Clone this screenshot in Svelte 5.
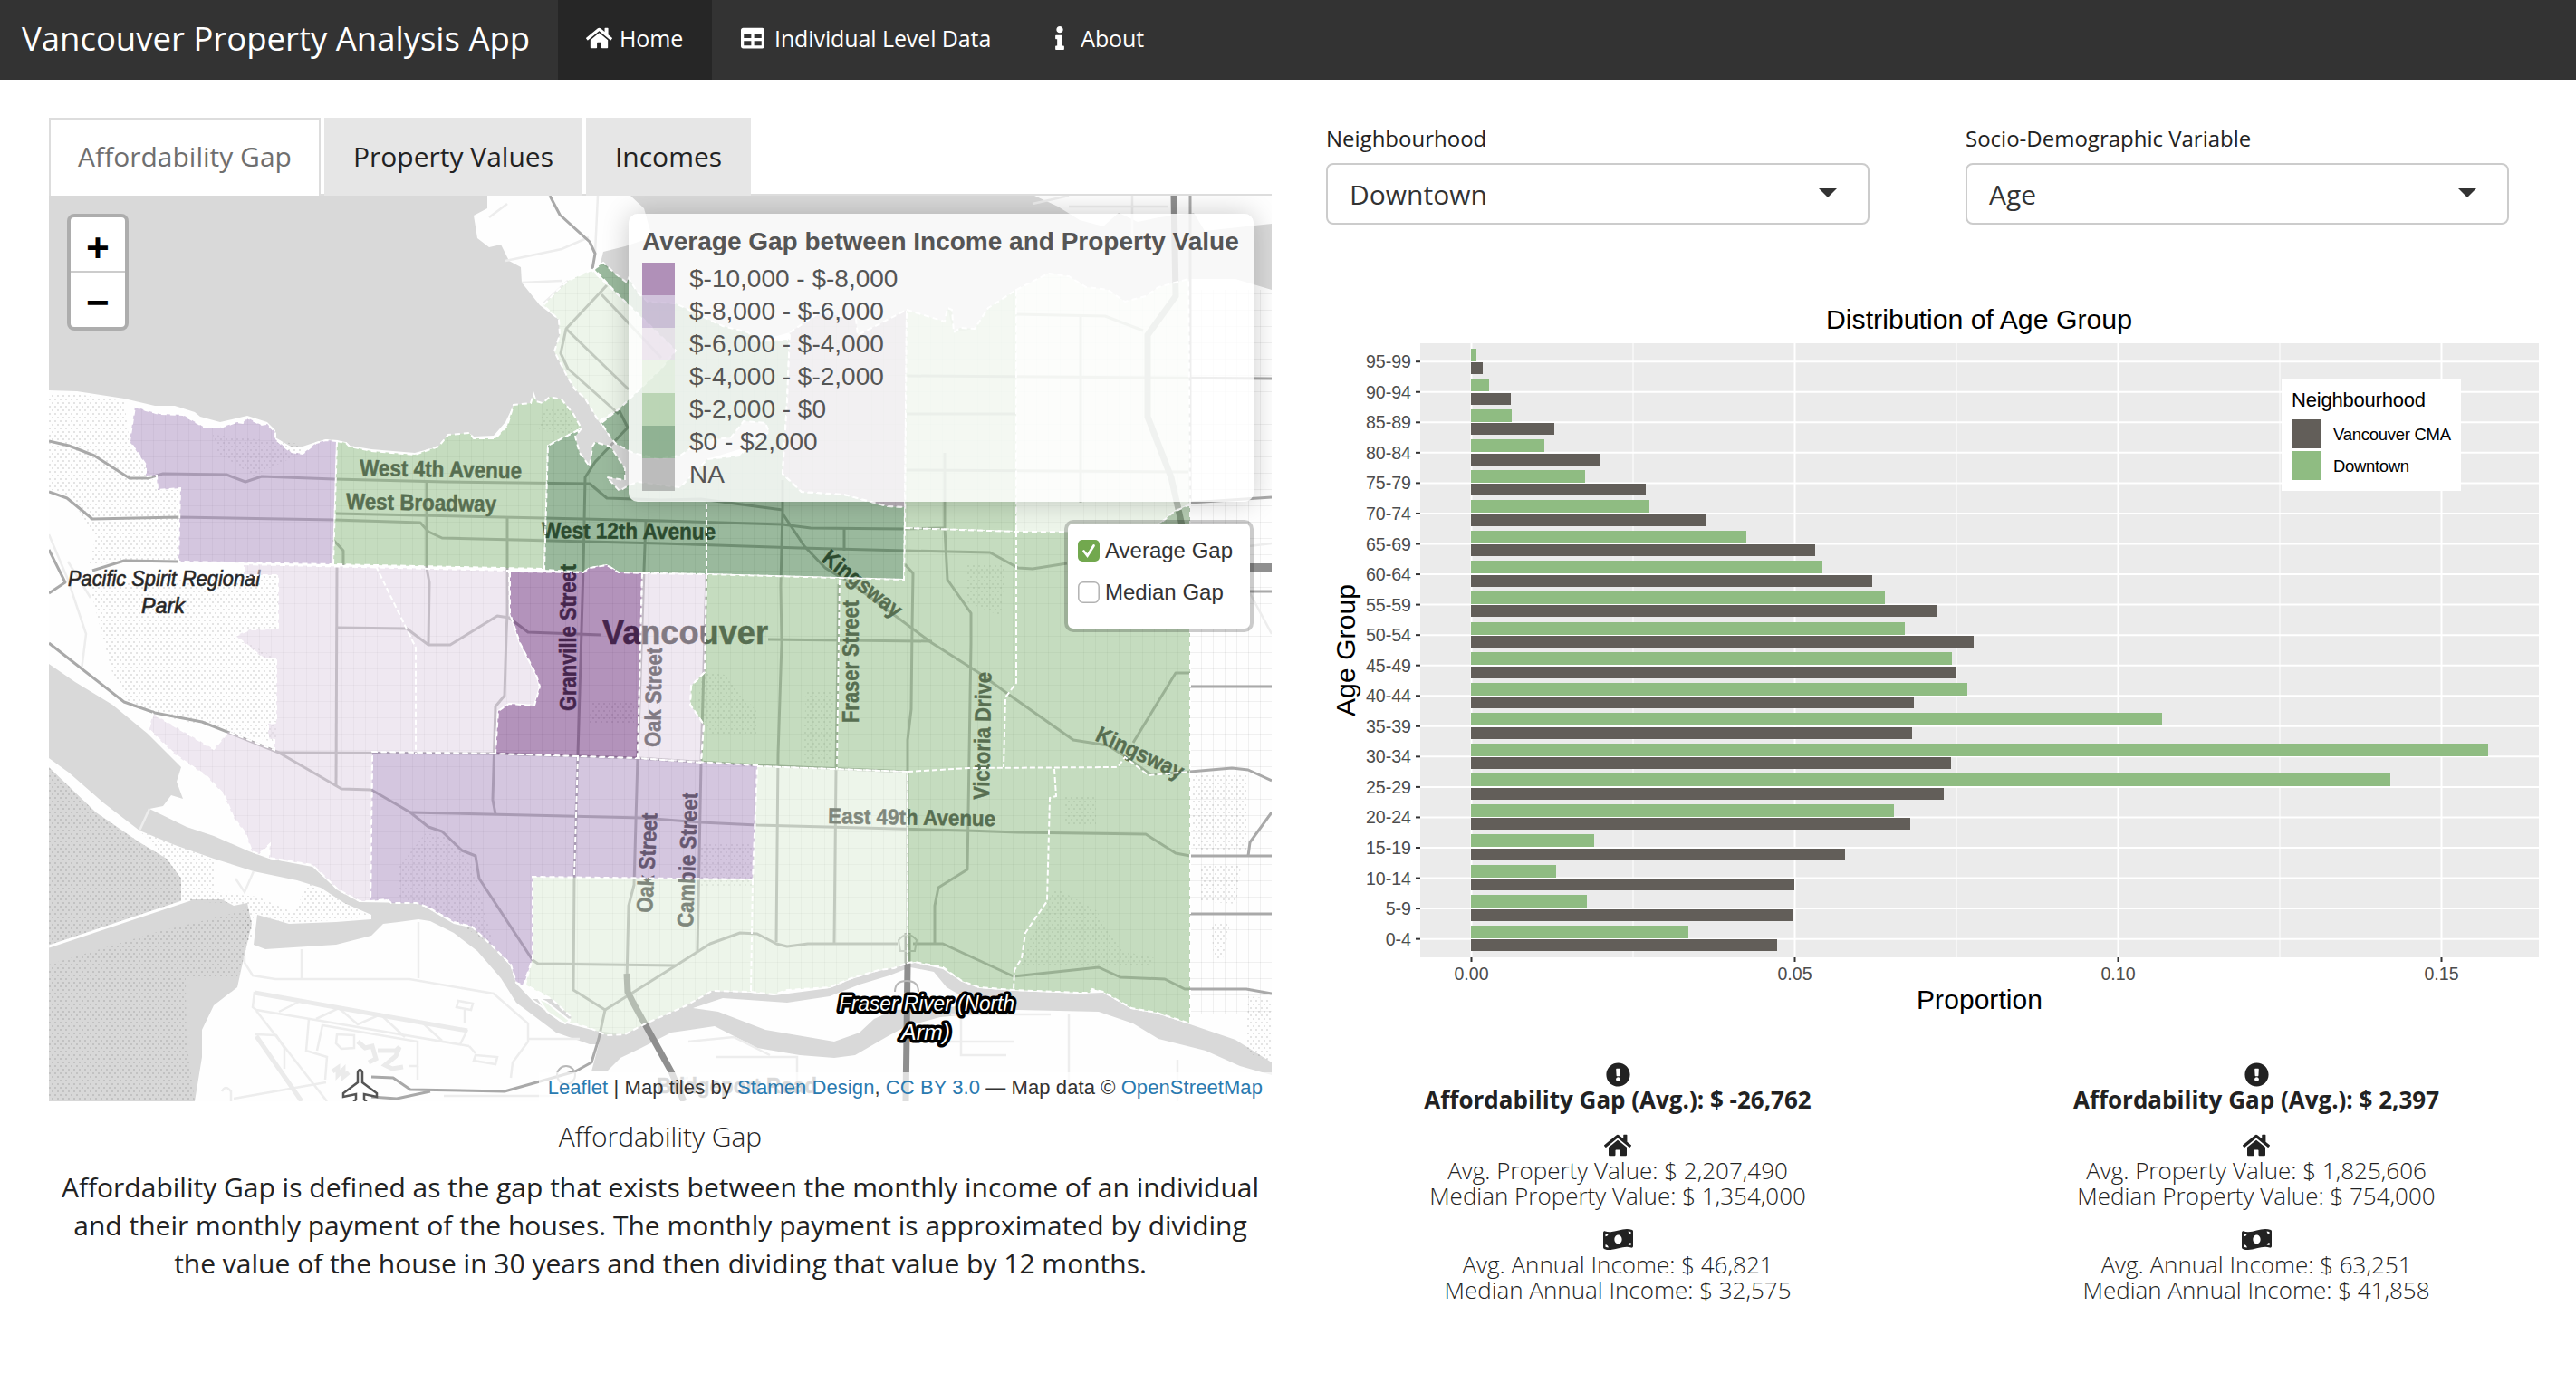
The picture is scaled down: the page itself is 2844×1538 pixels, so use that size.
<script>
  const home = 'M280.37 148.26L96 300.11V464a16 16 0 0 0 16 16l112.06-.29a16 16 0 0 0 15.92-16V368a16 16 0 0 1 16-16h64a16 16 0 0 1 16 16v95.64a16 16 0 0 0 16 16.05L464 480a16 16 0 0 0 16-16V300L295.67 148.26a12.19 12.19 0 0 0-15.3 0zM571.6 251.47L488 182.56V44.05a12 12 0 0 0-12-12h-56a12 12 0 0 0-12 12v72.61L318.47 43a48 48 0 0 0-61 0L4.34 251.47a12 12 0 0 0-1.6 16.9l25.5 31A12 12 0 0 0 45.15 301l235.22-193.74a12.19 12.19 0 0 1 15.3 0L530.9 301a12 12 0 0 0 16.9-1.6l25.5-31a12 12 0 0 0-1.7-16.93z';
  const table = 'M464 32H48C21.49 32 0 53.49 0 80v352c0 26.51 21.49 48 48 48h416c26.51 0 48-21.49 48-48V80c0-26.51-21.49-48-48-48zM224 416H64v-96h160v96zm0-160H64v-96h160v96zm224 160H288v-96h160v96zm0-160H288v-96h160v96z';
  const info = 'M20 424.229h20V279.771H20c-11.046 0-20-8.954-20-20V212c0-11.046 8.954-20 20-20h112c11.046 0 20 8.954 20 20v212.229h20c11.046 0 20 8.954 20 20V492c0 11.046-8.954 20-20 20H20c-11.046 0-20-8.954-20-20v-47.771c0-11.046 8.954-20 20-20zM96 0C56.235 0 24 32.235 24 72s32.235 72 72 72 72-32.235 72-72S135.764 0 96 0z';
  const alertIcon = 'M504 256c0 136.997-111.043 248-248 248S8 392.997 8 256C8 119.083 119.043 8 256 8s248 111.083 248 248zm-248 50c-25.405 0-46 20.595-46 46s20.595 46 46 46 46-20.595 46-46-20.595-46-46-46zm-43.673-165.346l7.418 136c.347 6.364 5.609 11.346 11.982 11.346h48.546c6.373 0 11.635-4.982 11.982-11.346l7.418-136c.375-6.874-5.098-12.654-11.982-12.654h-63.383c-6.884 0-12.356 5.78-11.981 12.654z';
  const money = 'M621.16 54.46C582.37 38.19 543.55 32 504.75 32c-123.17-.01-246.33 62.34-369.5 62.34-30.89 0-61.76-3.92-92.65-13.72-3.47-1.1-6.95-1.62-10.35-1.62C15.04 79 0 92.32 0 110.81v317.26c0 12.63 7.23 24.6 18.84 29.46C57.63 473.81 96.45 480 135.25 480c123.17 0 246.34-62.35 369.51-62.35 30.89 0 61.76 3.92 92.65 13.72 3.47 1.1 6.95 1.62 10.35 1.62 17.21 0 32.25-13.32 32.25-31.81V83.93c-.01-12.64-7.24-24.6-18.85-29.47zM48 132.22c20.12 5.04 41.12 7.57 62.72 8.93C104.84 170.54 79 192.69 48 192.69v-60.47zm0 285v-47.78c34.37 0 62.18 27.27 63.71 61.4-22.53-1.81-43.59-6.31-63.71-13.62zM320 352c-44.19 0-80-42.99-80-96 0-53.02 35.82-96 80-96s80 42.98 80 96c0 53.03-35.83 96-80 96zm272 27.78c-17.52-4.39-35.71-6.85-54.32-8.44 5.87-26.08 27.5-45.88 54.32-49.28v57.72zm0-236.11c-30.89-3.91-54.86-29.7-55.81-61.55 19.54 2.17 38.09 6.23 55.81 12.66v48.89z';

  // Choropleth areas, drawn half transparent over the base map
  const areas = [
    ['#a98dbf', 'M149,449 161,453 176,457 202,458 226,472 243,472 262,466 268,467 273,461 288,469 295,468 304,477 304,485 321,499 334,501 349,489 360,486 372,487 368,623 197,620 199,539 174,541 173,525 161,526 161,513 143,487Z'],
    ['#8bb97f', 'M372,487 382,489 386,493 410,498 458,502 484,493 495,480 518,478 523,484 547,484 560,470 567,447 586,445 589,435 592,443 599,445 607,438 620,441 633,457 642,473 605,492 601,628 368,623Z'],
    ['#dbebd5', 'M653,298 627,310 614,322 600,337 617,353 618,370 612,388 627,417 635,430 646,440 661,465 683,452 730,407 746,387 680,323 666,310Z'],
    ['#35733b', 'M656,297 666,290 679,302 692,312 694,307 704,323 715,333 746,335 781,352 798,360 826,367 836,377 869,375 872,367 869,443 864,523 885,543 932,546 980,559 999,560 998,640 780,634 683,632 670,624 651,627 644,632 601,629 605,492 642,473 635,482 640,500 651,515 654,493 657,488 674,493 690,517 690,530 670,527 684,542 692,537 704,532 751,538 781,507 817,503 826,493 849,477 845,467 821,465 807,483 774,487 751,503 727,507 699,500 680,490 674,483 664,467 683,452 730,407 746,387 680,323Z'],
    ['#7a6a7a', 'M872,367 905,345 945,352 947,370 1001,342 999,560 980,559 932,546 885,543 864,523 869,443Z'],
    ['#8bb97f', 'M1001,342 1043,355 1046,340 1051,342 1053,367 1060,362 1076,363 1091,340 1122,320 1122,587 999,583Z'],
    ['#dbebd5', 'M1122,320 1157,302 1180,305 1199,317 1223,320 1242,333 1265,327 1279,317 1312,308 1314,557 1296,565 1282,577 1262,588 1122,588Z'],
    ['#6c9a66', 'M1314,557 1296,565 1282,577 1262,588 1314,588Z'],
    ['#8bb97f', 'M999,583 1122,587 1314,588 1314,1130 1277,1118 1249,1113 1218,1095 1206,1092 1203,1096 1192,1096 1119,1093 1081,1090 1062,1083 1041,1068 1010,1062 1002,1063 1002,852 836,846 774,842 777,800 762,778 763,757 778,742 780,634 998,640Z'],
    ['#dbebd5', 'M836,846 1002,852 1002,1063 987,1069 970,1071 940,1080 916,1090 869,1093 855,1098 829,1095 786,1094 758,1110 713,1130 690,1142 670,1143 651,1135 627,1128 631,1123 609,1103 580,1087 588,1058 588,968 831,971Z'],
    ['#a98dbf', 'M411,830 547,832 704,837 836,845 831,971 588,968 588,1058 578,1088 570,1085 564,1065 547,1048 521,1023 501,1018 473,1002 460,997 432,997 427,993 409,995Z'],
    ['#dfd1e3', 'M269,623 562,630 563,677 574,710 592,745 596,758 590,779 562,777 550,785 547,832 411,830 409,995 397,995 373,982 345,955 297,947 298,932 286,943 278,940 271,920 258,903 247,877 228,857 193,833 164,805 169,788 193,802 236,827 252,808 303,828 303,817 296,815 296,799 305,798 305,727 291,727 260,702 276,695 307,694 307,635 269,635Z'],
    ['#672777', 'M563,631 644,632 651,627 670,624 683,632 709,633 704,837 547,832 550,785 562,777 590,779 596,758 592,745 574,710 563,677Z'],
    ['#dfd1e3', 'M709,633 780,634 778,742 763,757 762,778 777,800 774,842 704,837Z']
  ];

  const inner = [
    'M780,556 780,634', 'M415,625 459,715 459,832', 'M927,640 924,849', 'M1122,587 1122,754 1110,770 1108,847',
    'M638,834 634,967', 'M831,971 829,1095', 'M1002,852 1070,848 1234,847 1242,836 1268,856 1314,852',
    'M1164,849 1166,879 1159,881 1156,995 1132,1030 1128,1058 1120,1071 1119,1093'
  ];

  const roads = [
    'M54,487 76,492 104,503 143,528 163,528 180,523 250,524 271,532 289,526 369,529 492,532 651,534 670,550 730,552 774,551 864,563',
    'M371,567 601,572 730,575 864,579 895,583 999,584 1043,583',
    'M54,543 74,550 102,573 197,571 369,574 464,577 473,587 488,594 730,600 883,605 999,608 1093,610 1124,627 1140,628 1178,622',
    'M471,532 471,627 474,643 473,712', 'M368,596 379,608 379,624', 'M560,572 560,677 559,700 557,768 547,780 544,883 547,899',
    'M683,452 693,472 657,510 646,527 644,627 638,833 634,967 633,1093 668,1115 661,1147 653,1173 635,1183 557,1205 453,1203 434,1190 410,1189',
    'M713,575 711,630 704,837 700,977 694,1000 692,1083',
    'M668,1115 708,1090 751,1063 784,1042 817,1030 836,1031 857,1042 869,1045 892,1042 991,1042',
    'M1008,1042 1041,1042 1119,1078 1213,1068 1237,1079 1286,1081 1308,1092 1376,1092 1404,1097',
    'M864,530 864,563 862,647 863,710 859,833 857,1040', 'M774,842 770,1050', 'M780,634 774,842',
    'M864,567 888,603 911,627 944,647 1029,710 1081,743 1114,767 1185,817 1223,823 1242,835 1270,855 1314,852 1360,848 1378,850 1404,862',
    'M932,582 932,608', 'M926,645 923,850 921,1042', 'M999,623 1008,633 1007,693 1006,783 1002,817 1002,1060',
    'M1043,500 1043,583 1046,640 1072,677 1072,710 1068,960 1036,980 1032,1000 1032,1042',
    'M372,625 371,867', 'M372,693 449,694 473,712 497,712 549,680 562,682 583,698 664,701',
    'M848,706 1029,708', 'M308,831 547,832 704,837 836,845 1002,852',
    'M54,710 137,775 171,787 223,797 308,831 377,871 410,872 453,897 473,913 488,918 510,939 525,945 529,970 588,1060 594,1064 746,1066',
    'M453,897 709,903 774,908 836,911 1067,917 1124,919 1265,921 1298,942 1314,945 1404,945',
    'M1314,758 1404,758', 'M1314,1009 1404,1009', 'M1378,945 1380,930 1404,897', 'M1314,743 1298,743 1251,820', 'M1314,555 1404,549',
    'M1380,653 1404,653', 'M102,630 137,619 197,620', 'M54,607 72,643 54,655', 'M607,216 618,237 651,267 657,280 654,297',
    'M670,315 625,363 619,390 627,407 683,457', 'M625,363 694,430', 'M664,325 730,395', 'M1122,347 1220,349 1262,365', 'M1001,415 1404,418', 'M1314,216 1314,555',
    'M1193,350 1193,555', 'M1001,457 1122,457', 'M999,519 1312,521', 'M410,1211 438,1213 475,1205'
  ];
  const faint = [
    'M281,1095 279,1112 283,1115 354,1127 518,1155', 'M283,1116 361,1216', 'M308,1117 332,1105', 'M349,1125 374,1113 395,1131 420,1120 447,1145', 'M465,1128 488,1149',
    'M341,1125 338,1160 361,1167 359,1192', 'M350,1160 356,1132 461,1150 461,1177 452,1177', 'M461,1177 461,1192', 'M372,1142 391,1143 391,1157 377,1158 371,1152Z',
    'M508,1153 516,1137', 'M513,1130 513,1115', 'M506,1105 522,1108 520,1115 504,1112Z', 'M518,1155 525,1163', 'M525,1165 549,1167 547,1175 523,1171Z',
    'M333,1048 333,1080', 'M462,1018 462,1080', 'M270,1055 270,1063 279,1077 304,1081 452,1081 545,1097 583,1130 583,1150 566,1173 564,1190', 'M583,1147 640,1147',
    'M245,1205q4,-8 10,0v11', 'M258,1213 360,1195', 'M282,1142 305,1143 314,1157 314,1180', 'M490,1210 620,1210',
    'M54,590 75,640 95,700 90,740', 'M75,620 100,660', 'M260,970 270,985 280,962', 'M154,917 165,893', 'M540,240 560,225 M558,288 620,275 650,262', 'M576,312 620,310', 'M627,310 600,335', 'M660,216 657,280',
    'M760,1150 810,1145 850,1165', 'M790,1167 880,1167 880,1200', 'M690,1205 760,1190', 'M1050,1120 1160,1120', 'M1061,1120 1061,1165 1111,1165', 'M1180,1120 1180,1210', 'M1040,1150 1120,1150', 'M1300,1170 1300,1216',
    'M1140,225 1180,216 M1180,228 1290,228 M1250,216 1250,270', 'M1320,610 1404,600', 'M1380,655 1404,700'
  ];

  const streets = [
    ['West 4th Avenue', 397, 525, 179, 25, 1], ['West Broadway', 382, 562, 166, 25, 1], ['West 12th Avenue', 598, 594, 192, 25, 0.5],
    ['Vancouver', 665, 711, 183, 36, 0], ['Kingsway', 906, 619, 104, 25, 38], ['Kingsway', 1208, 817, 104, 25, 25],
    ['Granville Street', 636, 785, 162, 25, -90], ['Oak Street', 729, 825, 110, 25, -89], ['Oak Street', 720, 1008, 110, 25, -87],
    ['Cambie Street', 765, 1024, 149, 25, -88], ['Fraser Street', 948, 798, 135, 25, -90], ['Victoria Drive', 1092, 883, 141, 25, -89],
    ['East 49th Avenue', 914, 909, 185, 24, 1]
  ];

  const legend = [
    ['#672777', '$-10,000 - $-8,000'], ['#a98dbf', '$-8,000 - $-6,000'], ['#dfd1e3', '$-6,000 - $-4,000'], ['#dbebd5', '$-4,000 - $-2,000'],
    ['#8bb97f', '$-2,000 - $0'], ['#35733b', '$0 - $2,000'], ['#808080', 'NA']
  ];

  // Bar widths by age group: [label, Downtown, Vancouver CMA]
  const ages = [
    ['95-99', 6, 13], ['90-94', 20, 44], ['85-89', 45, 92], ['80-84', 81, 142], ['75-79', 126, 193], ['70-74', 197, 260], ['65-69', 304, 380],
    ['60-64', 388, 443], ['55-59', 457, 514], ['50-54', 479, 555], ['45-49', 531, 535], ['40-44', 548, 489], ['35-39', 763, 487], ['30-34', 1123, 530],
    ['25-29', 1015, 522], ['20-24', 467, 485], ['15-19', 136, 413], ['10-14', 94, 357], ['5-9', 128, 356], ['0-4', 240, 338]
  ];
  const rowY = (i) => 399.2 + i * 33.55;
  const ticks = [['0.00', 1624.5], ['0.05', 1981.5], ['0.10', 2338.5], ['0.15', 2695.5]];

  const stats = [
    ['$ -26,762', '$ 2,207,490', '$ 1,354,000', '$ 46,821', '$ 32,575'],
    ['$ 2,397', '$ 1,825,606', '$ 754,000', '$ 63,251', '$ 41,858']
  ];
</script>

<nav>
  <div class="brand">Vancouver Property Analysis App</div>
  <div class="item active"><svg viewBox="0 0 576 512" width="29" height="26"><path d={home} /></svg>Home</div>
  <div class="item data"><svg viewBox="0 0 512 512" width="26" height="26"><path d={table} /></svg>Individual Level Data</div>
  <div class="item about"><svg viewBox="0 0 192 512" width="10" height="26"><path d={info} /></svg>About</div>
</nav>

<main>
  <section class="left">
    <div class="tabs">
      <div class="tab current">Affordability Gap</div>
      <div class="tab">Property Values</div>
      <div class="tab">Incomes</div>
    </div>
    <div class="map">
      <svg class="base" viewBox="54 216 1350 1000" width="1350" height="1000">
        <defs>
          <pattern id="dots" width="6" height="8" patternUnits="userSpaceOnUse"><rect width="2" height="2" fill="#000" opacity=".1" /><rect x="3" y="4" width="2" height="2" fill="#000" opacity=".1" /></pattern>
          <pattern id="grid" width="13" height="18" patternUnits="userSpaceOnUse"><path d="M0 .5H13M.5 0V18" stroke="#000" opacity=".055" fill="none" /></pattern>
        </defs>
        <rect x="54" y="216" width="1350" height="1000" fill="#fefefe" />
        <g fill="#d9d9d9">
          <path d="M54,216 538,216 538,230 523,238 527,263 540,273 553,270 562,288 575,295 576,312 596,337 617,353 618,370 612,388 627,417 635,430 646,440 661,465 674,483 680,490 699,500 727,507 751,503 774,487 807,483 821,465 845,467 849,477 826,493 781,507 751,538 704,532 684,542 670,527 690,530 690,517 674,493 657,488 654,493 651,515 640,500 635,482 642,473 633,457 620,441 607,438 599,445 592,443 589,435 586,445 567,447 558,466 545,481 523,482 518,478 495,480 484,493 458,500 410,496 386,492 382,488 360,485 349,488 334,493 321,493 304,483 304,475 295,466 273,459 243,466 221,460 215,455 193,448 171,448 137,440 85,432 54,431Z" />
          <path d="M696,216 1142,216 1168,228 1192,243 1218,250 1235,235 1256,245 1280,240 1318,235 1330,255 1404,247 1404,320 1364,308 1312,308 1279,317 1265,327 1242,333 1223,320 1199,317 1180,305 1157,302 1122,320 1091,340 1076,363 1053,367 1046,340 1043,355 1001,342 947,370 945,352 905,345 872,367 836,377 826,367 798,360 781,352 746,335 715,333 704,323 692,312 679,302 663,290 666,278 690,272 720,262 711,230Z" />
          <path d="M54,733 83,753 124,778 163,810 200,847 195,863 202,882 189,878 180,890 165,893 206,913 236,923 275,940 297,948 345,957 373,983 397,996 462,997 501,1020 523,1025 549,1050 564,1067 570,1086 588,1105 618,1128 657,1138 690,1142 713,1130 758,1110 786,1094 829,1096 855,1099 916,1091 940,1081 970,1072 1002,1065 1010,1063 1041,1070 1062,1084 1081,1091 1119,1094 1192,1097 1218,1096 1249,1114 1277,1119 1314,1131 1364,1148 1404,1173 1404,1187 1369,1177 1331,1160 1279,1147 1251,1130 1213,1117 1124,1115 1038,1123 1001,1133 982,1143 944,1165 921,1168 883,1165 836,1157 789,1133 741,1140 708,1157 685,1168 670,1183 653,1183 661,1153 651,1153 614,1140 570,1107 553,1080 527,1050 501,1030 475,1017 462,1015 440,1018 423,1020 410,1033 371,1043 293,1048 280,1043 284,1010 319,1020 371,1018 410,1015 410,1010 380,997 354,980 328,972 280,962 236,948 193,933 154,917 115,887 76,853 54,837Z" />
        </g>
        <path d="M765,1113 798,1102 869,1107 916,1100 949,1087 982,1077 1005,1068 1031,1073 1045,1090 1057,1097 1080,1108 1040,1113 987,1115 965,1125 949,1140 921,1150 845,1137 793,1117Z" fill="#fefefe" />
        <path d="M609,1103 631,1123 627,1128 618,1124 588,1103Z" fill="#d9d9d9" />
        <path d="M54,847 106,897 154,930 184,948 200,970 200,997 54,1045Z M54,1045 210,993 245,993 258,1000 273,997 278,1020 267,1067 262,1090 236,1110 223,1137 223,1167 215,1216 54,1216Z" fill="#d8d8d8" />
        <path d="M54,847 106,897 154,930 184,948 200,970 200,997 54,1045Z M54,1065 170,1030 275,1004 278,1020 267,1067 262,1078 205,1079 206,1150 215,1216 54,1216Z" fill="url(#dots)" />
        <path d="M54,1045 210,993" stroke="#fff" stroke-width="3" fill="none" />
        <path d="M54,434 85,435 137,443 143,487 161,513 174,541 197,541 197,620 137,620 98,623 106,593 93,573 76,547 54,540Z M98,643 265,635 307,635 307,694 276,695 260,702 305,727 305,820 236,803 193,794 145,780 124,743 110,690Z M154,917 193,933 236,948 236,985 284,990 325,1008 340,975 410,1012 319,1020 280,1008 278,1040 270,1040 272,998 200,995 198,965 175,940Z M1316,855 1376,855 1376,938 1316,938Z M1325,955 1370,955 1365,998 1325,995Z M1337,1020 1358,1020 1350,1058 1340,1058Z M1378,1100 1404,1103 1404,1172 1376,1162Z" fill="url(#dots)" />
        {#each areas as [, d]}<path {d} fill="url(#grid)" />{/each}
        <path d="M1314,320H1404V1120H1314Z" fill="url(#grid)" />
        <path d="M235,480 330,490 334,500 280,525 240,500Z M440,957 470,920 500,925 525,965 545,1045 500,1015 440,990Z M653,775 700,775 700,800 650,800Z M775,742 800,745 835,785 835,810 785,810 770,780Z M890,763 920,763 918,842 886,842Z M1068,624 1110,624 1105,680 1068,665Z M1165,980 1210,1005 1240,1050 1275,1058 1265,1068 1125,1068 1140,1030Z M1175,880 1210,880 1210,912 1175,912Z M600,450 630,450 635,480 595,475Z M774,930 830,930 830,980 774,980Z" fill="url(#dots)" />
        <g fill="none" stroke="#ededed" stroke-width="2.500">{#each faint as d}<path {d} />{/each}</g>
        <path d="M281,1096 516,1138M283,1144 333,1216M395,1150l8,7 8,-2 4,14 -8,4M417,1160h20l4,-4 -4,10 -12,10 8,4 12,-2M367,1183l6,-4v8l6,-6v8l6,-5" fill="none" stroke="#ebebeb" stroke-width="5" />
        <g fill="none" stroke="#a9a9a9" stroke-width="3" stroke-linejoin="round">{#each roads as d}<path {d} />{/each}</g>
        <g fill="none" stroke="#8f8f8f" stroke-width="7">
          <path d="M692,1075 693,1095 699,1107 741,1183 755,1216" /><path d="M1002,1030 1002,1065 1000,1216" /><path d="M1296,216 1298,327 1267,370 1267,460 1293,527 1305,580" /><path d="M1380,627H1404" stroke-width="10" />
        </g>
        <g fill="none" stroke="#b8b8b8" stroke-width="2"><circle cx="625" cy="1187" r="10" /><path d="M988,1095q0,-12 13,-12q13,0 13,12M992,1038q10,-12 20,0l-2,12h-16z" /></g>
        <g class="street">
          {#each streets as [name, x, y, w, size, turn]}
            <text transform="translate({x} {y}) rotate({turn})" font-size={size} textLength={w} lengthAdjust="spacingAndGlyphs">{name}</text>
          {/each}
          <text x="725" y="1207" font-size="24" textLength="177" lengthAdjust="spacingAndGlyphs" opacity=".55">Bridgeport Road</text>
        </g>
        <g class="park">
          <text x="75" y="647" textLength="212" lengthAdjust="spacingAndGlyphs">Pacific Spirit Regional</text>
          <text x="156" y="677" textLength="48" lengthAdjust="spacingAndGlyphs">Park</text>
        </g>
        {#each areas as [color, d]}
          <path {d} fill={color} fill-opacity=".5" stroke="#fff" stroke-width="2" stroke-dasharray="6 4" />
        {/each}
        <g fill="none" stroke="#fff" stroke-width="2" stroke-dasharray="6 3">{#each inner as d}<path {d} />{/each}</g>
        <path d="M594,1102 603,1106 629,1127 624,1130 604,1117Z" fill="#edf5ea" stroke="#fff" stroke-width="2" />
        <g class="river">
          <text x="926" y="1116" textLength="194" lengthAdjust="spacingAndGlyphs">Fraser River (North</text>
          <text x="995" y="1148" textLength="54" lengthAdjust="spacingAndGlyphs">Arm)</text>
        </g>
        <path d="M395,1195v-11q2.500,-6 5,0v11l16,12v4l-14,-3v6l5,5h-19l5,-5v-6l-14,3v-4z" fill="#fff" stroke="#555" stroke-width="2.500" />
      </svg>

      <div class="zoom"><div>+</div><div>−</div></div>

      <div class="legend">
        <strong>Average Gap between Income and Property Value</strong>
        {#each legend as [color, label]}
          <div class="class"><i style:background={color}></i><span>{label}</span></div>
        {/each}
      </div>

      <div class="layers">
        <div class="layer"><svg width="24" height="24" viewBox="0 0 24 24"><rect width="24" height="24" rx="5" fill="#72a84e" /><path d="M6.500 12.500l4 5L17.500 6.500" fill="none" stroke="#fff" stroke-width="2.800" stroke-linecap="round" /></svg>Average Gap</div>
        <div class="layer"><svg width="24" height="24" viewBox="0 0 24 24"><rect x=".8" y=".8" width="22.400" height="22.400" rx="5" fill="#fff" stroke="#b2b2b2" stroke-width="1.500" /></svg>Median Gap</div>
      </div>

      <div class="credit"><b>Leaflet</b> | Map tiles by <b>Stamen Design</b>, <b>CC BY 3.0</b> — Map data © <b>OpenStreetMap</b></div>
    </div>
    <h2>Affordability Gap</h2>
    <p>Affordability Gap is defined as the gap that exists between the monthly income of an individual<br />and their monthly payment of the houses. The monthly payment is approximated by dividing<br />the value of the house in 30 years and then dividing that value by 12 months.</p>
  </section>

  <section class="right">
    <div class="filters">
      <div class="field"><div class="label">Neighbourhood</div><div class="select">Downtown<span class="caret"></span></div></div>
      <div class="field"><div class="label">Socio-Demographic Variable</div><div class="select">Age<span class="caret"></span></div></div>
    </div>

    <svg class="chart" viewBox="1464 320 1344 820" width="1344" height="820">
      <text x="2016" y="363" font-size="29" textLength="338" lengthAdjust="spacingAndGlyphs">Distribution of Age Group</text>
      <rect x="1568" y="379" width="1235" height="678" fill="#ebebeb" />
      <g stroke="#fff">
        {#each [1803, 2160, 2517] as x}<path d="M{x} 379V1057" stroke-width="1" />{/each}
        {#each ticks as [, x]}<path d="M{x} 379V1057" stroke-width="2" />{/each}
        {#each ages as row, i}<path d="M1568 {rowY(i)}H2803" stroke-width="2" />{/each}
      </g>
      {#each ages as [label, downtown, cma], i}
        <rect x="1624" y={Math.round(rowY(i) - 14.6)} width={downtown} height="14" fill="#8fbc82" />
        <rect x="1624" y={Math.round(rowY(i) + 0.8)} width={cma} height="13" fill="#625e59" />
        <path d="M1563 {rowY(i)}H1568" stroke="#333" stroke-width="2" />
        <text class="tick" x="1558" y={rowY(i) + 7} text-anchor="end">{label}</text>
      {/each}
      {#each ticks as [label, x]}
        <path d="M{x} 1057V1062" stroke="#333" stroke-width="2" />
        <text class="tick" {x} y="1082" text-anchor="middle">{label}</text>
      {/each}
      <text x="2116" y="1114" font-size="30" textLength="139">Proportion</text>
      <text transform="translate(1496 791) rotate(-90)" font-size="30" textLength="146">Age Group</text>
      <rect x="2519" y="419" width="198" height="123" fill="#fff" />
      <text x="2530" y="449" font-size="22" textLength="148">Neighbourhood</text>
      <rect x="2531" y="463" width="32" height="32" fill="#625e59" />
      <rect x="2531" y="498" width="32" height="32" fill="#8fbc82" />
      <text x="2576" y="486" font-size="18.500" textLength="130">Vancouver CMA</text>
      <text x="2576" y="521" font-size="18.500" textLength="84">Downtown</text>
    </svg>

    <div class="stats">
      {#each stats as s}
        <div class="stat">
          <svg viewBox="0 0 512 512" width="27" height="27"><path d={alertIcon} /></svg>
          <div class="line strong">Affordability Gap (Avg.): {s[0]}</div>
          <svg class="second" viewBox="0 0 576 512" width="30" height="27"><path d={home} /></svg>
          <div class="line">Avg. Property Value: {s[1]}</div>
          <div class="line">Median Property Value: {s[2]}</div>
          <svg class="third" viewBox="0 0 640 512" width="33" height="27"><path d={money} /></svg>
          <div class="line">Avg. Annual Income: {s[3]}</div>
          <div class="line">Median Annual Income: {s[4]}</div>
        </div>
      {/each}
    </div>
  </section>
</main>

<style>
  :global(body) { margin: 0; background: #fff; font-family: 'Open Sans', sans-serif; color: #222; }
  nav { height: 88px; background: #333; display: flex; color: #fff; box-sizing: border-box; line-height: 84px; }
  .brand { width: 616px; padding-left: 24px; box-sizing: border-box; font-size: 36.500px; line-height: 84px; font-weight: 400; white-space: nowrap; }
  .item { display: flex; align-items: center; font-size: 25px; letter-spacing: -.1px; gap: 8px; white-space: nowrap; height: 84px; }
  .item svg { fill: #fff; }
  .active { width: 170px; height: 88px; padding: 0 0 4px 31px; box-sizing: border-box; background: #262626; }
  .data { margin-left: 32px; gap: 11px; }
  .about { margin-left: 71px; gap: 18px; }
  main { display: grid; grid-template-columns: 1350px 1344px; column-gap: 60px; padding: 42px 0 0 54px; }
  .tabs { display: flex; gap: 4px; height: 86px; box-sizing: border-box; border-bottom: 2px solid #ddd; }
  .tab { height: 86px; box-sizing: border-box; line-height: 86px; padding: 0 32px; font-size: 30px; background: #e6e6e6; color: #222; white-space: nowrap; }
  .current { background: #fff; border: 2px solid #ddd; border-bottom: 0; color: #6f6f6f; padding: 0 30px; line-height: 82px; }
  .map { position: relative; width: 1350px; height: 1000px; overflow: hidden; font-family: 'Liberation Sans', Arial, sans-serif; }
  .base { display: block; }
  .street text { font-family: 'Liberation Sans', sans-serif; font-weight: 700; fill: #222; stroke: #222; stroke-width: .5; }
  .park text { font: italic 24px 'Liberation Sans', sans-serif; fill: #222; stroke: #333; stroke-width: .7; }
  .river text { font: italic 24px 'Liberation Sans', sans-serif; fill: #fff; stroke: #000; stroke-width: 7; paint-order: stroke; stroke-linejoin: round; }
  .zoom { position: absolute; left: 20px; top: 20px; width: 60px; border: 4px solid rgba(0, 0, 0, .2); border-radius: 8px; background: #fff; background-clip: padding-box; font: 700 44px/60px 'Liberation Mono', monospace; color: #000; text-align: center; }
  .zoom div { height: 54px; padding-top: 6px; }
  .zoom div:first-child { height: 52px; padding-top: 7px; border-bottom: 2px solid #ccc; }
  .legend { position: absolute; left: 640px; top: 20px; width: 690px; height: 318px; box-sizing: border-box; padding: 14px 15px; border-radius: 10px; background: rgba(255, 255, 255, .8); box-shadow: 0 0 30px rgba(0, 0, 0, .2); color: #555; font-size: 28px; }
  .legend strong { display: block; height: 40px; line-height: 34px; white-space: nowrap; }
  .class { display: flex; height: 36px; line-height: 36px; }
  .class i { width: 36px; height: 36px; margin-right: 16px; opacity: .5; }
  .layers { position: absolute; left: 1121px; top: 358px; width: 209px; height: 124px; box-sizing: border-box; padding: 7px 11px; border: 4px solid rgba(0, 0, 0, .2); border-radius: 10px; background: #fff; background-clip: padding-box; font-size: 24px; color: #333; }
  .layer { display: flex; align-items: center; gap: 6px; height: 46px; white-space: nowrap; }
  .credit { position: absolute; right: 0; bottom: 0; height: 32px; line-height: 34px; padding: 0 10px; background: rgba(255, 255, 255, .7); font-size: 22px; letter-spacing: .08px; color: #333; white-space: nowrap; }
  .credit b { font-weight: 400; color: #2a7ab0; }
  h2 { margin: 19px 0 0; height: 40px; line-height: 40px; font-size: 30px; font-weight: 300; text-align: center; }
  p { margin: 15px -20px 0; line-height: 42px; font-size: 30px; text-align: center; white-space: nowrap; }
  .filters { display: flex; gap: 106px; padding-top: 8px; }
  .field { width: 600px; }
  .label { height: 42px; line-height: 30px; font-size: 24px; }
  .select { display: flex; align-items: center; justify-content: space-between; height: 68px; box-sizing: border-box; border: 2px solid #ccc; border-radius: 8px; padding: 0 34px 0 24px; font-size: 30px; color: #333; }
  .caret { border: 10px solid transparent; border-top-color: #333; border-bottom: 0; margin-top: -3px; }
  .chart { display: block; margin-top: 72px; }
  .chart text { font-family: 'Liberation Sans', sans-serif; fill: #000; }
  .chart .tick { font-size: 19.600px; fill: #4d4d4d; }
  .stats { display: grid; grid-template-columns: 644px 644px; column-gap: 61px; padding-top: 33px; }
  .stat { display: flex; flex-direction: column; align-items: center; fill: #222; }
  .stat svg { display: block; height: 27px; }
  .stat .second { margin-top: 23px; margin-bottom: 0; }
  .stat .third { margin-top: 21px; margin-bottom: 0; }
  .line { height: 28px; line-height: 28px; font-size: 26px; font-weight: 300; white-space: nowrap; }
  .strong { font-weight: 700; }
</style>
